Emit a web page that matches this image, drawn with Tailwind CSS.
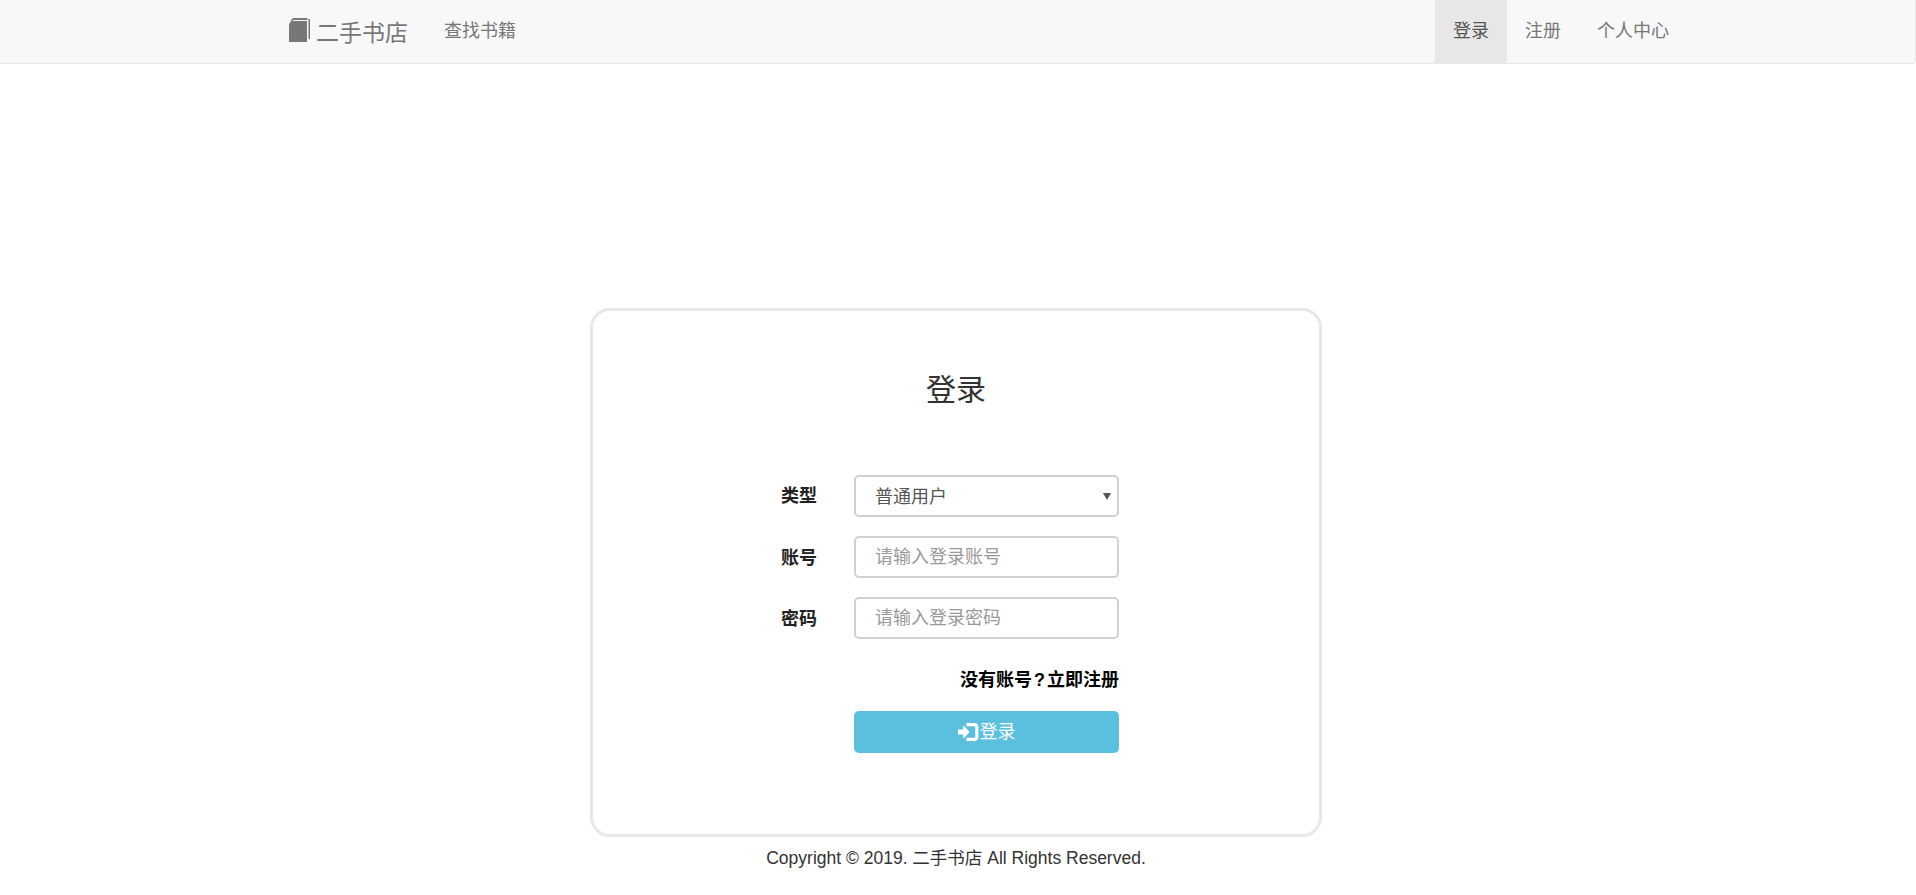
<!DOCTYPE html>
<html lang="zh-CN">
<head>
  <meta charset="UTF-8" />
  <meta name="viewport" content="width=device-width, initial-scale=1.0" />
  <title>登录</title>
  <script src="https://cdn.jsdelivr.net/npm/@tailwindcss/browser@4"></script>
</head>
<body class="bg-white text-[#333] font-['Liberation_Sans','Noto_Sans_CJK_SC',sans-serif] min-h-screen">

  <!-- navbar -->
  <nav class="h-[64px] bg-[#f8f8f8] border-b border-r border-[#e7e7e7] rounded-br-[4px] flex pl-[289px] pr-[228px] text-[#777]">
    <a class="flex items-center h-[63px] pt-[3px] text-[23px]">
      <svg class="w-[21px] h-[25px] mr-[6px] mb-[6px]" viewBox="0 0 21 25">
        <path fill="#777" d="M5 0h13.500v2H6C4 2 2.500 3 1 5.500 1.500 2.500 3 0 5 0z"/>
        <path fill="#777" d="M19.500 1H21v20h-1.500z"/>
        <path fill="#777" d="M4.500 3H18v21H0V7.500C0 5 2 3 4.500 3z"/>
      </svg>
      二手书店
    </a>
    <a class="flex items-center h-[63px] ml-[36px] text-[18px]">查找书籍</a>
    <ul class="flex ml-auto text-[18px]">
      <li class="flex items-center h-[63px] px-[18px] bg-[#e7e7e7] text-[#555]">登录</li>
      <li class="flex items-center h-[63px] px-[18px]">注册</li>
      <li class="flex items-center h-[63px] px-[18px]">个人中心</li>
    </ul>
  </nav>

  <!-- login card -->
  <main class="w-[732px] h-[529px] ml-[590px] mt-[244px] border-[3px] border-[#e7e7e7] rounded-[20px] pt-[59px]">
    <h1 class="text-[30px] leading-[40px] text-center">登录</h1>
    <form class="mt-[65px] ml-[188px] w-[338px] flex flex-col">
      <div class="flex items-center h-[42px] mb-[19px]">
        <label class="w-[73px] text-[18px] font-bold text-[#222]">类型</label>
        <div class="relative w-[265px]">
          <select class="appearance-none w-full h-[42px] border-2 border-[#d0d0d0] rounded-[5px] pl-[19px] pt-[2px] text-[18px] text-[#555] bg-white">
            <option>普通用户</option>
          </select>
          <span class="absolute right-[8px] top-[18px] w-0 h-0 border-x-[4px] border-x-transparent border-t-[7px] border-t-[#555]"></span>
        </div>
      </div>
      <div class="flex items-center h-[42px] mb-[19px]">
        <label class="w-[73px] pt-[2px] text-[18px] font-bold text-[#222]">账号</label>
        <input class="w-[265px] h-[42px] border-2 border-[#d0d0d0] rounded-[5px] pl-[19px] text-[18px] placeholder:text-[#999]" placeholder="请输入登录账号" />
      </div>
      <div class="flex items-center h-[42px]">
        <label class="w-[73px] pt-[2px] text-[18px] font-bold text-[#222]">密码</label>
        <input class="w-[265px] h-[42px] border-2 border-[#d0d0d0] rounded-[5px] pl-[19px] text-[18px] placeholder:text-[#999]" placeholder="请输入登录密码" />
      </div>
      <a class="mt-[28px] text-right text-[18px] leading-[26px] font-bold text-black">没有账号<span class="mx-[2px]">?</span>立即注册</a>
      <button type="button" class="mt-[18px] ml-[73px] w-[265px] h-[42px] bg-[#5bc0de] rounded-[5px] text-white text-[18px] flex items-center justify-center">
        <svg class="w-[22px] h-[20px]" viewBox="0 0 21 19" fill="#fff">
          <path d="M0 7h5V3l6 6.500-6 6.500v-4H0z"/>
          <path d="M8 1h8c2 0 3.500 1.500 3.500 3.500v10c0 2-1.500 3.500-3.500 3.500H8v-3h7c1 0 1.500-.5 1.500-1.500V5.500C16.500 4.500 16 4 15 4H8z"/>
        </svg>
        登录
      </button>
    </form>
  </main>

  <footer class="mt-[8px] text-center text-[17.500px] leading-[26px] text-[#333] w-[1912px]">Copyright © 2019. 二手书店 All Rights Reserved.</footer>
</body>
</html>
